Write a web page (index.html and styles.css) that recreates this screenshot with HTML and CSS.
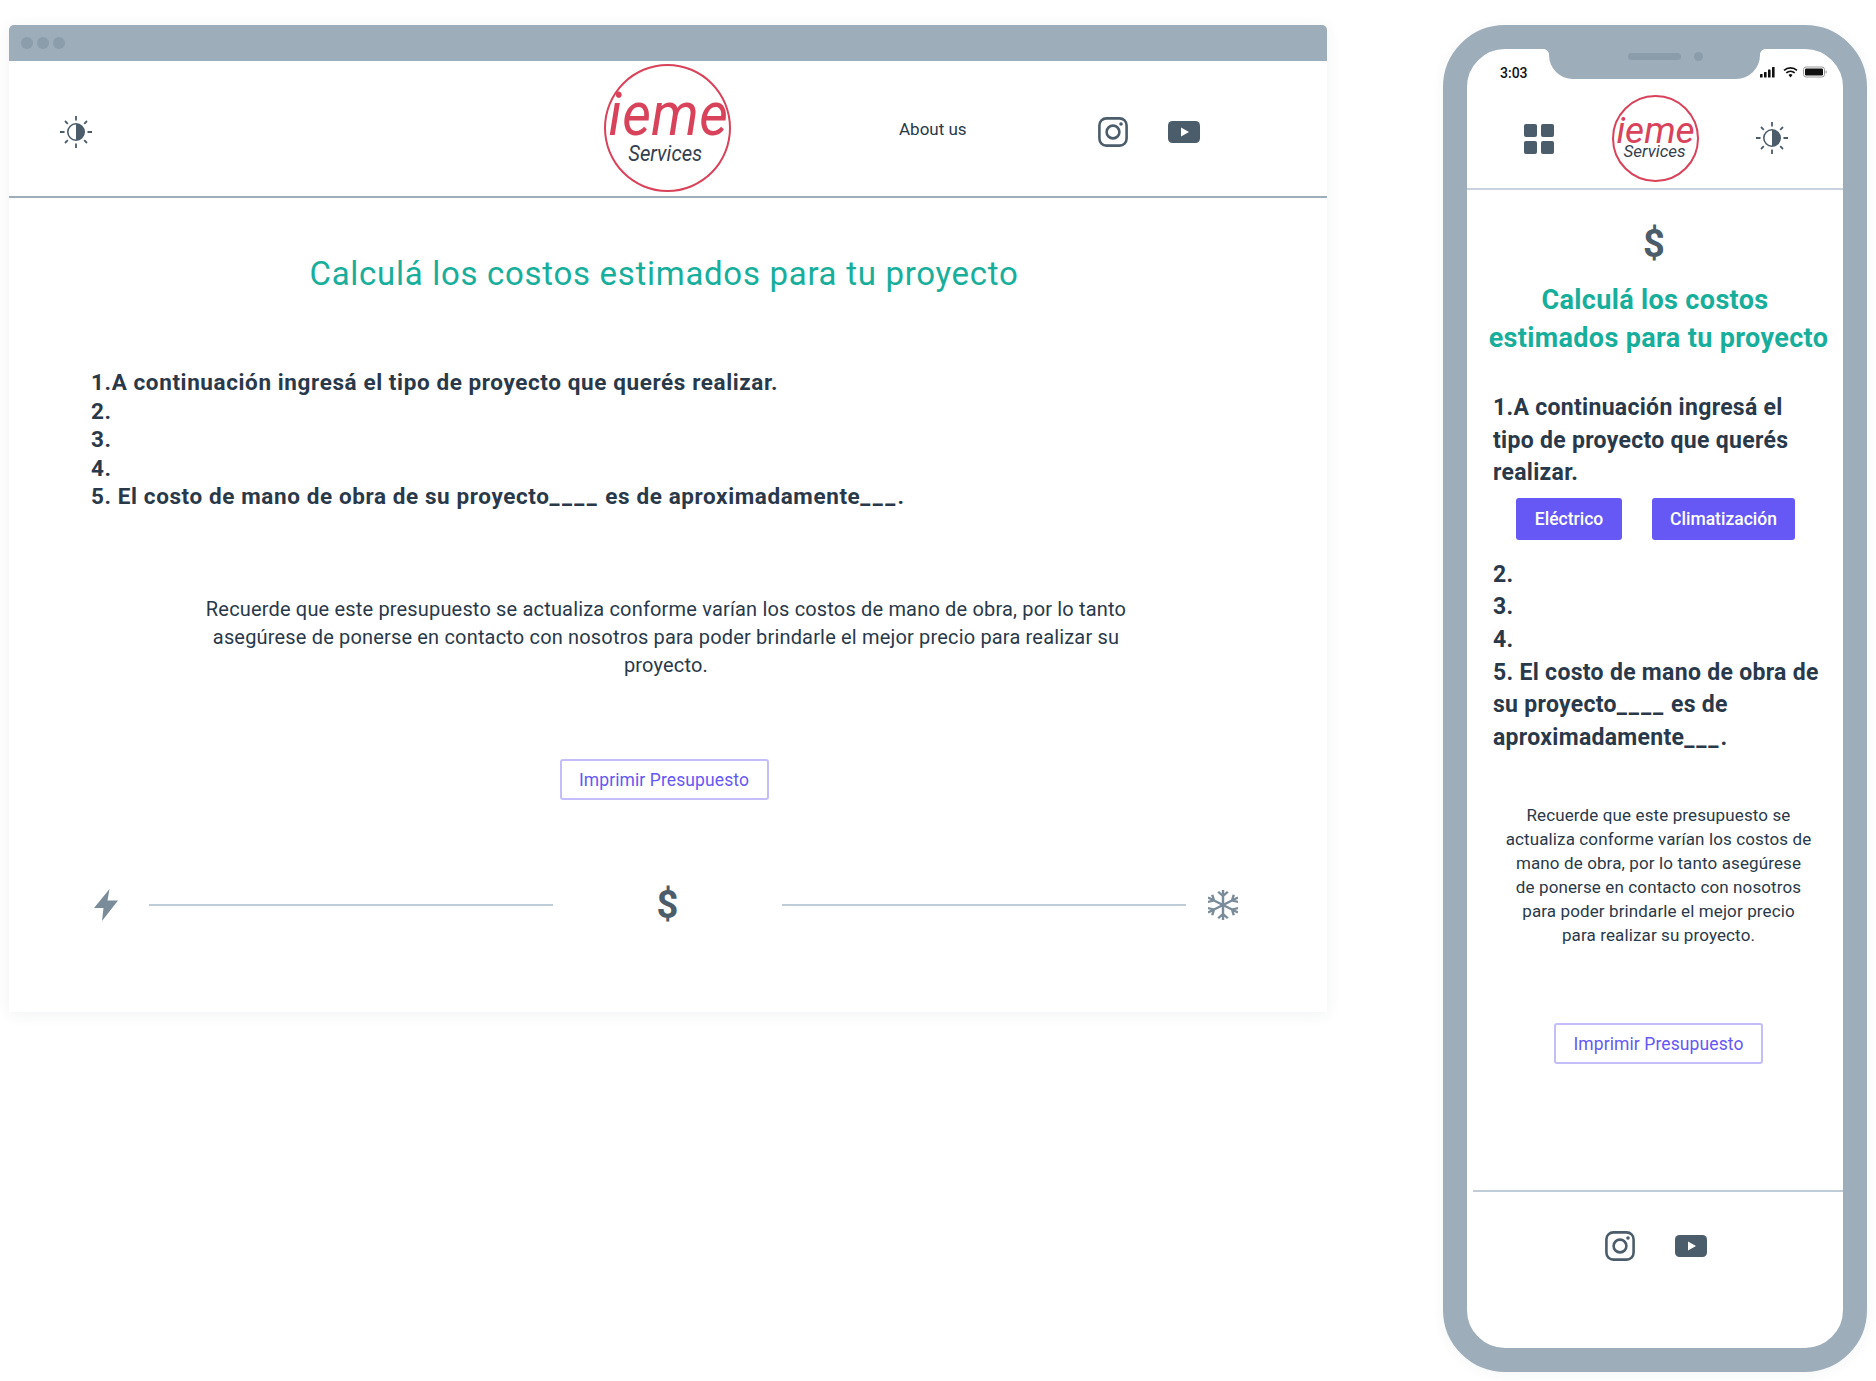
FILE: index.html
```html
<!DOCTYPE html>
<html lang="es">
<head>
<meta charset="utf-8">
<title>ieme Services</title>
<link rel="stylesheet" href="styles.css">
</head>
<body>
<svg class="defs" width="0" height="0" aria-hidden="true">
  <symbol id="sun" viewBox="0 0 32 32">
    <circle cx="16" cy="16" r="8.200" fill="none" stroke="#4b5c6b" stroke-width="1.600"/>
    <path d="M16 7.800a8.200 8.200 0 0 1 0 16.400z" fill="#4b5c6b"/>
    <path d="M16 0v4.500M16 27.500V32M0 16h4.500M27.500 16H32M5 5l2.800 2.800M24.200 24.200L27 27M5 27l2.800-2.800M24.200 7.800L27 5" stroke="#4b5c6b" stroke-width="1.800" fill="none"/>
  </symbol>
  <symbol id="insta" viewBox="0 0 30 30">
    <rect x="1.400" y="1.400" width="27.200" height="27.200" rx="7" fill="none" stroke="#4b5c6b" stroke-width="2.600"/>
    <circle cx="15" cy="15" r="6.400" fill="none" stroke="#4b5c6b" stroke-width="2.600"/>
    <circle cx="23" cy="7" r="1.800" fill="#4b5c6b"/>
  </symbol>
  <symbol id="yt" viewBox="0 0 32 22">
    <rect width="32" height="22" rx="4.500" fill="#4b5c6b"/>
    <path d="M13 6.500v9l8-4.500z" fill="#fff"/>
  </symbol>
</svg>

<main class="stage">
  <section class="browser">
    <div class="bar"><i class="dot"></i><i class="dot"></i><i class="dot"></i></div>
    <header class="top">
      <svg class="sun"><use href="#sun"/></svg>
      <div class="logo logo-lg"><span class="ieme">ieme</span><span class="serv">Services</span></div>
      <a class="about">About us</a>
      <svg class="insta top-insta"><use href="#insta"/></svg>
      <svg class="yt top-yt"><use href="#yt"/></svg>
    </header>
    <div class="content">
      <h1 class="title">Calculá los costos estimados para tu proyecto</h1>
      <div class="steps">
        <p>1.A continuación ingresá el tipo de proyecto que querés realizar.</p>
        <p>2.</p>
        <p>3.</p>
        <p>4.</p>
        <p>5. El costo de mano de obra de su proyecto<span class="blank">____</span> es de aproximadamente<span class="blank">___</span>.</p>
      </div>
      <p class="note">Recuerde que este presupuesto se actualiza conforme varían los costos de mano de obra, por lo tanto<br>asegúrese de ponerse en contacto con nosotros para poder brindarle el mejor precio para realizar su<br>proyecto.</p>
      <a class="print">Imprimir Presupuesto</a>
      <div class="progress">
        <svg class="bolt" viewBox="0 0 24 32"><path d="M15.500 0 L0 19 H9.500 L8 32 L24 11.500 H13.500 Z" fill="#7a8b9a"/></svg>
        <span class="rule"></span>
        <span class="money">$</span>
        <span class="rule"></span>
        <svg class="snow" viewBox="2 0 26 32" preserveAspectRatio="none" fill="none" stroke="#7a8b9a" stroke-width="2.100">
          <path d="M15 16V1M10.800 2.800L15 7l4.200-4.200"/>
          <g transform="rotate(60 15 16)"><path d="M15 16V1M10.800 2.800L15 7l4.200-4.200"/></g>
          <g transform="rotate(120 15 16)"><path d="M15 16V1M10.800 2.800L15 7l4.200-4.200"/></g>
          <g transform="rotate(180 15 16)"><path d="M15 16V1M10.800 2.800L15 7l4.200-4.200"/></g>
          <g transform="rotate(240 15 16)"><path d="M15 16V1M10.800 2.800L15 7l4.200-4.200"/></g>
          <g transform="rotate(300 15 16)"><path d="M15 16V1M10.800 2.800L15 7l4.200-4.200"/></g>
        </svg>
      </div>
    </div>
  </section>

  <section class="phone">
    <div class="screen">
      <div class="notch"><i class="speaker"></i><i class="camera"></i></div>
      <div class="status">
        <span class="time">3:03</span>
        <svg class="signals" viewBox="0 0 67 12">
          <rect x="0" y="8" width="2.600" height="3.500" rx=".6" fill="#111"/>
          <rect x="4" y="6" width="2.600" height="5.500" rx=".6" fill="#111"/>
          <rect x="8" y="3.500" width="2.600" height="8" rx=".6" fill="#111"/>
          <rect x="12" y="1" width="2.600" height="10.500" rx=".6" fill="#111"/>
          <path d="M24 4.300a10 10 0 0 1 13 0M26.300 6.800a6.500 6.500 0 0 1 8.400 0" fill="none" stroke="#111" stroke-width="1.700"/>
          <path d="M28.500 9a3 3 0 0 1 4 0l-2 2.400z" fill="#111"/>
          <rect x="43.500" y="1" width="21" height="10" rx="2.500" fill="none" stroke="#9a9a9a"/>
          <rect x="45" y="2.500" width="18" height="7" rx="1.200" fill="#111"/>
          <path d="M65.500 4.500v3c1 0 1.400-.6 1.400-1.500s-.4-1.500-1.400-1.500z" fill="#aaa"/>
        </svg>
      </div>
      <header class="m-top">
        <svg class="grid" viewBox="0 0 30 30" fill="#4b5c6b">
          <rect width="13" height="13" rx="2"/><rect x="17" width="13" height="13" rx="2"/>
          <rect y="17" width="13" height="13" rx="2"/><rect x="17" y="17" width="13" height="13" rx="2"/>
        </svg>
        <div class="logo logo-sm"><span class="ieme">ieme</span><span class="serv">Services</span></div>
        <svg class="sun m-sun"><use href="#sun"/></svg>
      </header>
      <div class="m-money">$</div>
      <h1 class="m-title"><span>Calculá los costos</span><span class="m-title-b">estimados para tu proyecto</span></h1>
      <div class="m-steps">
        <p>1.A continuación ingresá el<br>tipo de proyecto que querés<br>realizar.</p>
        <div class="choices"><a class="choice choice-a">Eléctrico</a><a class="choice choice-b">Climatización</a></div>
        <p>2.</p>
        <p>3.</p>
        <p>4.</p>
        <p>5. El costo de mano de obra de<br>su proyecto<span class="blank">____</span> es de<br>aproximadamente<span class="blank">___</span>.</p>
      </div>
      <p class="m-note">Recuerde que este presupuesto se<br>actualiza conforme varían los costos de<br>mano de obra, por lo tanto asegúrese<br>de ponerse en contacto con nosotros<br>para poder brindarle el mejor precio<br>para realizar su proyecto.</p>
      <a class="print m-print">Imprimir Presupuesto</a>
      <footer class="m-foot">
        <svg class="insta"><use href="#insta"/></svg>
        <svg class="yt m-yt"><use href="#yt"/></svg>
      </footer>
    </div>
  </section>
</main>
</body>
</html>
```
FILE: styles.css
```css
* { box-sizing: border-box; }
html, body { margin: 0; padding: 0; background: #fff; }
body { font-family: Roboto, "Liberation Sans", sans-serif; color: #29394a; width: 1876px; height: 1381px; overflow: hidden; }
p, h1 { margin: 0; }
.defs { position: absolute; }
svg { display: block; flex: none; }

.stage { display: flex; align-items: flex-start; padding: 25px 0 0 9px; }

/* Desktop mockup */
.browser { width: 1318px; height: 987px; border-radius: 5px 5px 0 0; box-shadow: 0 2px 16px rgba(40, 60, 80, .07); }
.bar { height: 36px; background: #9dadba; border-radius: 5px 5px 0 0; display: flex; align-items: center; gap: 4px; padding-left: 12px; }
.dot { width: 12px; height: 12px; border-radius: 50%; background: #8b9caa; }

.top { height: 137px; border-bottom: 2px solid #9dadba; display: flex; align-items: flex-start; padding-left: 51px; }
.sun { width: 32px; height: 32px; }
.top .sun { margin-top: 55px; }
.logo { border: 2px solid #d8425a; border-radius: 50%; display: flex; flex-direction: column; align-items: center; font-style: italic; flex: none; }
.logo-lg { width: 127px; height: 128px; margin: 3px 0 0 512px; padding-top: 22px; }
.logo-lg .ieme { font-size: 60px; line-height: 54px; color: #d8425a; transform: translateX(1px) scaleX(.93); letter-spacing: .5px; }
.logo-lg .serv { font-size: 22px; line-height: 22px; color: #34404e; transform: translateX(-2px) scaleX(.92); margin-top: 1px; }
.about { font-size: 17px; line-height: 20px; margin: 58px 0 0 168px; width: 199px; }
.insta { width: 30px; height: 30px; }
.yt { width: 32px; height: 22px; }
.top-insta { margin-top: 56px; }
.top-yt { margin: 60px 0 0 40px; }

.content { display: flex; flex-direction: column; align-items: center; padding-top: 56px; }
.title { font-size: 33px; line-height: 40px; font-weight: 400; letter-spacing: .7px; color: #17ae9b; margin-right: 8px; white-space: nowrap; }
.steps { align-self: flex-start; margin: 74px 0 0 82px; font-size: 22.500px; line-height: 28.500px; font-weight: 700; letter-spacing: .6px; white-space: nowrap; }
.blank { letter-spacing: 2.400px; }
.note { margin: 84px 4px 0 0; font-size: 20px; line-height: 28px; letter-spacing: .17px; text-align: center; white-space: nowrap; }
.print { display: flex; align-items: center; justify-content: center; width: 209px; height: 41px; border: 2px solid #c3bdfa; border-radius: 3px; color: #6558f5; font-size: 17.500px; letter-spacing: .1px; }
.content > .print { margin: 80px 8px 0 0; padding-top: 1px; }
.progress { align-self: flex-start; display: flex; align-items: center; margin: 89px 0 0 85px; }
.bolt { width: 24px; height: 32px; margin-right: 31px; }
.rule { width: 404px; height: 2px; background: #c0ccd6; }
.money { width: 229px; text-align: center; font-size: 38px; line-height: 32px; font-weight: 700; color: #4b5c6b; }
.snow { width: 30px; height: 32px; margin-left: 22px; }

/* Phone mockup */
.phone { width: 424px; height: 1347px; margin-left: 116px; border: 24px solid #9dadba; border-radius: 62px; box-shadow: 0 2px 14px rgba(40, 60, 80, .05); }
.screen { position: relative; height: 100%; border-radius: 38px; overflow: hidden; display: flex; flex-direction: column; }
.notch { position: absolute; left: 82px; top: 0; width: 211px; height: 30px; background: #9dadba; border-radius: 0 0 24px 24px; }
.notch::before, .notch::after { content: ""; position: absolute; top: 0; width: 5px; height: 5px; }
.notch::before { left: -5px; background: radial-gradient(circle at 0 100%, transparent 4.500px, #9dadba 5px); }
.notch::after { right: -5px; background: radial-gradient(circle at 100% 100%, transparent 4.500px, #9dadba 5px); }
.speaker { position: absolute; left: 79px; top: 4px; width: 53px; height: 7px; border-radius: 4px; background: #8b9caa; }
.camera { position: absolute; left: 145px; top: 3px; width: 9px; height: 9px; border-radius: 50%; background: #8b9caa; }
.status { height: 46px; position: relative; display: flex; justify-content: space-between; align-items: flex-start; padding: 16px 16px 0 33px; }
.time { font-size: 14px; line-height: 16px; font-weight: 500; color: #111; }
.signals { width: 67px; height: 12px; margin-top: 1px; }

.m-top { height: 95px; border-bottom: 2px solid #c8d3dd; display: flex; align-items: flex-start; padding-left: 57px; }
.grid { width: 30px; height: 30px; margin-top: 29px; }
.logo-sm { width: 87px; height: 87px; margin-left: 58px; padding-top: 18px; }
.logo-sm .ieme { font-size: 37px; line-height: 32px; color: #d8425a; font-weight: 400; }
.logo-sm .serv { font-size: 17px; line-height: 17px; color: #34404e; margin-top: -4px; transform: translateX(-1px); }
.m-sun { margin: 27px 0 0 57px; }

.m-money { text-align: center; font-size: 38px; line-height: 32px; font-weight: 700; color: #4b5c6b; margin-top: 38px; padding-right: 2px; }
.m-title { margin-top: 21px; text-align: center; font-size: 27px; line-height: 38px; font-weight: 700; letter-spacing: .35px; color: #17ae9b; white-space: nowrap; }
.m-title span { display: block; }
.m-title-b { padding-left: 7px; }
.m-steps { margin: 35px 0 0 26px; font-size: 23px; line-height: 32.600px; font-weight: 700; letter-spacing: .3px; white-space: nowrap; }
.m-steps .blank { letter-spacing: 1.800px; }
.choices { display: flex; margin: 8px 0 19px 23px; letter-spacing: 0; }
.choice { height: 42px; padding-top: 1px; border-radius: 3px; background: #6558f5; color: #fff; display: flex; align-items: center; justify-content: center; font-size: 17.500px; font-weight: 500; line-height: 1; }
.choice-a { width: 106px; }
.choice-b { width: 143px; margin-left: 30px; }
.m-note { margin: 49px 0 0 7px; text-align: center; font-size: 17px; line-height: 24px; letter-spacing: .12px; white-space: nowrap; }
.m-print { align-self: center; margin: 76px 0 0 7px; }
.m-foot { margin: 126px 0 0 6px; border-top: 2px solid #c0ccd6; padding: 39px 0 0 132px; display: flex; align-items: center; }
.m-yt { margin-left: 40px; }
```
